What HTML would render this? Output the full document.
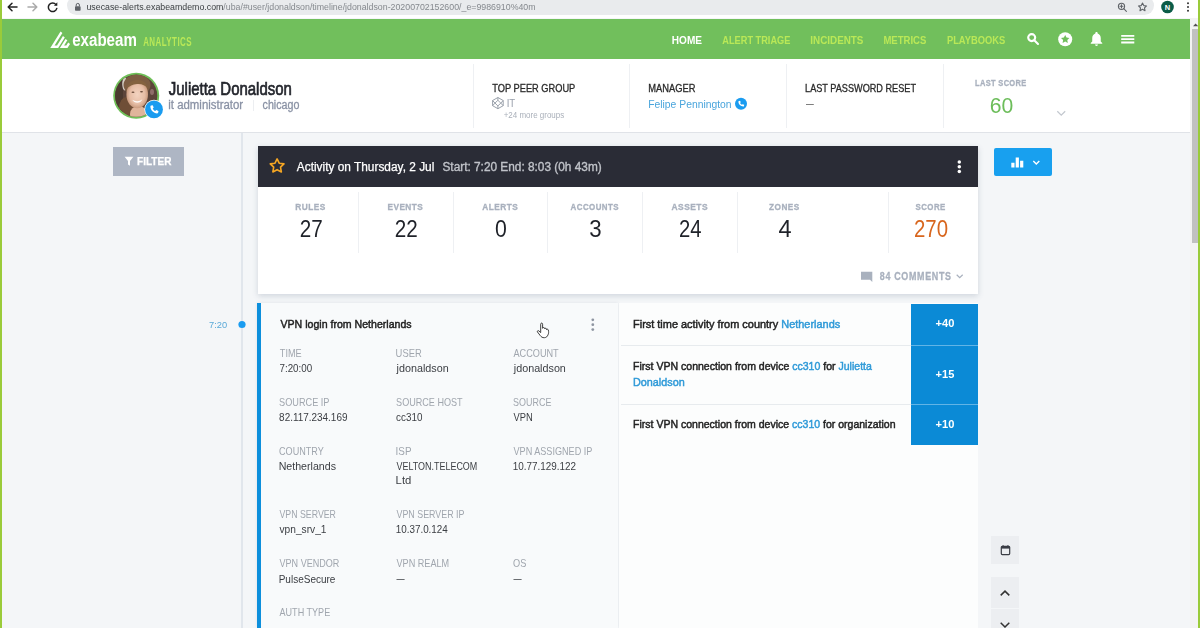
<!DOCTYPE html>
<html><head><meta charset="utf-8">
<style>
*{box-sizing:border-box;margin:0;padding:0}
html,body{width:1200px;height:628px;overflow:hidden;background:#f4f6f8;font-family:"Liberation Sans",sans-serif;}
.abs{position:absolute}
.t{position:absolute;white-space:nowrap;transform-origin:0 50%;line-height:1}
#chrome{left:0;top:0;width:1200px;height:18px;background:#fff}
#url{left:67px;top:-4px;width:1086.5px;height:19.4px;border-radius:10px;background:#e9ebed}
#nav{left:0;top:18.6px;width:1190px;height:40.4px;background:#71bf5c}
#prof{left:0;top:59px;width:1190px;height:74px;background:#fff;border-bottom:1.5px solid #e0e3e8}
#edgeL{left:0;top:0;width:2px;height:628px;background:#9acb3a}
#edgeR{left:1198px;top:0;width:2px;height:628px;background:#9acb3a}
#sbtrack{left:1190px;top:18px;width:8px;height:610px;background:#f3f3f3}
#sbthumb{left:1192px;top:29px;width:6px;height:213.5px;background:#c1c1c1}
.vd{position:absolute;width:1px;background:#eef0f3}
#tline{left:241.3px;top:133px;width:1.6px;height:495px;background:#e1e6ec}
#filter{left:113px;top:147px;width:71px;height:29px;background:#aeb6c4}
#card{left:257.5px;top:146px;width:720.5px;height:148px;background:#fff;box-shadow:0 2px 6px rgba(60,80,110,.2)}
#chead{left:257.5px;top:146px;width:720.5px;height:40.6px;background:#2a2c36}
#bluebtn{left:994px;top:148px;width:58px;height:27.8px;background:#18a0ef;border-radius:2px}
#ev{left:257px;top:303px;width:360.5px;height:325px;background:#f8fafb;box-shadow:0 0 3px rgba(60,80,110,.12)}
#evb{left:257px;top:303px;width:3.6px;height:325px;background:#0d8fdc}
#rp{left:619px;top:303px;width:359px;height:325px;background:#fcfdfd}
.sep{position:absolute;left:621px;width:290px;height:1px;background:#e7ebee}
.sc{position:absolute;left:911.4px;width:66.4px;background:#0b8ad6}
.fb{position:absolute;left:990.7px;width:28.2px;background:#eceef1}
</style></head><body>
<div class="abs" id="chrome"></div>
<div class="abs" id="url"></div>
<svg class="abs" style="left:0;top:0" width="1200" height="18" viewBox="0 0 1200 18">
 <g fill="none" stroke="#222" stroke-width="1.5" stroke-linecap="round" stroke-linejoin="round">
  <path d="M17 7H8.5M12 3.2L8.2 7l3.8 3.8"/>
  <path d="M28 7h8.5M33 3.2L36.8 7L33 10.8" stroke="#aaa"/>
  <path d="M56 4.6A4.3 4.3 0 1 0 56.8 8.4"/>
 </g>
 <path d="M57.3 2.3v3.4h-3.4z" fill="#222"/>
 <rect x="75" y="6.2" width="5.6" height="4.6" rx="0.8" fill="#5f6368"/>
 <path d="M76.2 6.4V5a1.6 1.6 0 0 1 3.2 0v1.4" fill="none" stroke="#5f6368" stroke-width="1"/>
 <g fill="none" stroke="#5f6368" stroke-width="1.1">
  <circle cx="1121.5" cy="6.3" r="3.1"/><path d="M1123.8 8.7l2.6 2.6M1120 6.3h3M1121.5 4.8v3" stroke-linecap="round"/>
  <path d="M1142.500 3l1.250 2.600 2.800.350-2.050 1.950.5 2.800-2.500-1.350-2.500 1.350.5-2.800-2.050-1.950 2.800-.350z" stroke-linejoin="round"/>
 </g>
 <circle cx="1167.5" cy="7" r="6.3" fill="#0b5c48"/>
 <text x="1167.5" y="9.7" font-family="Liberation Sans" font-size="7.5" font-weight="bold" fill="#fff" text-anchor="middle">N</text>
 <circle cx="1188" cy="3.3" r="1" fill="#333"/><circle cx="1188" cy="7" r="1" fill="#333"/><circle cx="1188" cy="10.7" r="1" fill="#333"/>
</svg>
<div class="abs" id="nav"></div>
<div class="abs" id="prof"></div>
<!-- nav icons -->
<svg class="abs" style="left:0;top:18px" width="1192" height="41" viewBox="0 18 1192 41">
 <g fill="none" stroke="#fff" stroke-width="2.4" stroke-linejoin="miter" transform="translate(60 0) scale(0.92 1) translate(-60 0)">
  <path d="M61.6 32.3L51.7 46.7H57.4L64.2 36.8"/>
  <path d="M67 39.6L62.1 46.7H67.5L69.9 43.2"/>
 </g>
 <g fill="none" stroke="#fff" stroke-width="2.1" stroke-linecap="round">
  <circle cx="1031.7" cy="37.6" r="3.5"/><path d="M1034.5 40.500l3.500 3.500"/>
 </g>
 <circle cx="1065.2" cy="39.2" r="7" fill="#fff"/>
 <path d="M1065.200 34.900l1.300 2.700 2.900.400-2.100 2 .5 2.900-2.600-1.400-2.600 1.400.5-2.900-2.100-2 2.900-.400z" fill="#71bf5c"/>
 <g transform="translate(1096.500 39.200) scale(1.150) translate(-1096 -39.400)">
 <path d="M1096 33.200c.600 0 1 .400 1 .900v.400c1.700.500 2.700 2 2.700 3.900v3.100l1.300 1.300v.600h-10v-.600l1.300-1.300v-3.100c0-1.900 1-3.400 2.700-3.900v-.400c0-.500.400-.900 1-.900zM1094.700 44.100h2.600a1.300 1.300 0 0 1-2.600 0z" fill="#fff"/>
 </g>
 <path d="M1121.200 35.900h13.100M1121.200 39.200h13.100M1121.200 42.500h13.100" stroke="#fff" stroke-width="1.800"/>
</svg>
<!-- profile -->
<div class="vd" style="left:472.5px;top:64px;height:64px"></div>
<div class="vd" style="left:629px;top:64px;height:64px"></div>
<div class="vd" style="left:786px;top:64px;height:64px"></div>
<div class="vd" style="left:942.5px;top:64px;height:64px"></div>
<div class="vd" style="left:253px;top:100px;height:11px;background:#eceef1"></div>
<svg class="abs" style="left:100px;top:59px" width="1000" height="74" viewBox="100 59 1000 74">
 <defs>
  <clipPath id="avc"><circle cx="136.200" cy="95.700" r="21.100"/></clipPath>
  <radialGradient id="face" cx="0.5" cy="0.5" r="0.5"><stop offset="0" stop-color="#f3d3c0"/><stop offset="0.700" stop-color="#e6bda5"/><stop offset="1" stop-color="#c99a7e"/></radialGradient>
 </defs>
 <circle cx="136.200" cy="95.700" r="23" fill="#6fbf58"/>
 <g clip-path="url(#avc)">
  <rect x="113" y="72" width="47" height="47" fill="#5c443a"/>
  <rect x="113" y="72" width="10" height="47" fill="#4b392f"/>
  <ellipse cx="124.800" cy="84" rx="2.600" ry="6.500" fill="#ece6df" opacity="0.850"/>
  <ellipse cx="152" cy="92" rx="2" ry="3" fill="#b08a8a" opacity="0.600"/>
  <ellipse cx="137" cy="85" rx="13.500" ry="10.500" fill="#7d5d42"/>
  <ellipse cx="126.500" cy="108" rx="7.500" ry="11" fill="#6f4e37"/>
  <ellipse cx="138.500" cy="114" rx="8.500" ry="8" fill="#e0b59b"/>
  <ellipse cx="137.200" cy="94.500" rx="10.800" ry="13.800" fill="url(#face)"/>
  <path d="M126.500 89c1.500-7 7-9.500 12-9c5 .5 8.500 3.500 9.500 8.500c-3-3.500-6.500-5-11-4.500c-4.500.5-7.500 2-10.500 5z" fill="#84623f"/>
  <path d="M132.300 99.800c3 1.900 7.500 1.900 10-.6c-1.400 4.300-8 4.900-10 .6z" fill="#fdf8f5"/>
  <ellipse cx="133" cy="92.200" rx="1.500" ry="0.700" fill="#6a4b3a"/><ellipse cx="141.500" cy="91.800" rx="1.500" ry="0.700" fill="#6a4b3a"/>
 </g>
 <circle cx="154" cy="109.400" r="9.600" fill="#fff"/>
 <circle cx="154" cy="109.400" r="8.900" fill="#1a9cf0"/>
 <path id="ph" d="M151.200 105.600l1.500-.3 1 2.300-1 .9c.5 1.200 1.400 2.100 2.600 2.600l.9-1 2.300 1-.3 1.500c-.1.500-.5.800-1 .8-3.700 0-6.800-3.100-6.800-6.800 0-.5.300-.9.800-1z" fill="#fff"/>
 <!-- peer group icon -->
 <g fill="none" stroke="#8f96a1" stroke-width="0.9" stroke-linejoin="round">
  <path d="M497.900 97.500l5.300 3v5.200l-5.300 3-5.300-3v-5.200z"/>
  <path d="M497.900 100.300l2.900 2.800-2.900 2.800-2.900-2.800z"/>
  <path d="M497.900 97.500v2.800M497.900 105.900v2.800M492.600 100.500l2.400 2.600-2.400 2.600M503.200 100.500l-2.400 2.600 2.400 2.600"/>
 </g>
 <circle cx="741" cy="103.700" r="6" fill="#1a9cf0"/>
 <path d="M739 100.900l1.050-.2.700 1.650-.7.650c.35.850 1 1.500 1.850 1.850l.65-.7 1.650.7-.2 1.050c-.1.350-.35.600-.7.600-2.650 0-4.900-2.250-4.900-4.900 0-.35.250-.6.600-.7z" fill="#fff"/>
 <path d="M1057.300 111.300l3.950 3.800 3.950-3.800" fill="none" stroke="#c3c8cf" stroke-width="1.300"/>
</svg>
<!-- body -->
<div class="abs" id="tline"></div>
<div class="abs" id="filter"></div>
<div class="abs" id="card"></div>
<div class="abs" id="chead"></div>
<div class="abs" id="bluebtn"></div>
<div class="vd" style="left:358px;top:192px;height:61px"></div>
<div class="vd" style="left:452.5px;top:192px;height:61px"></div>
<div class="vd" style="left:546.5px;top:192px;height:61px"></div>
<div class="vd" style="left:642px;top:192px;height:61px"></div>
<div class="vd" style="left:736.5px;top:192px;height:61px"></div>
<div class="vd" style="left:888px;top:192px;height:61px"></div>
<div class="abs" id="ev"></div>
<div class="abs" id="rp"></div>
<div class="abs" id="evb"></div>
<div class="sep" style="top:345.2px"></div>
<div class="sep" style="top:403.8px"></div>
<div class="sc" style="top:303.5px;height:141.8px"></div>
<div class="sc" style="top:345px;height:1.3px;background:#62b4e6"></div>
<div class="sc" style="top:403.6px;height:1.3px;background:#62b4e6"></div>
<div class="fb" style="top:536.4px;height:28px"></div>
<div class="fb" style="top:577px;height:31.3px"></div>
<div class="fb" style="top:609.2px;height:30px"></div>
<svg class="abs" style="left:100px;top:133px" width="1000" height="495" viewBox="100 133 1000 495">
 <!-- funnel -->
 <path d="M124.600 156.800h8.800l-3.400 4.100v4.900l-2-1.300v-3.600z" fill="#fff"/>
 <!-- star -->
 <path transform="translate(277.100 166.100) scale(1.080) translate(-277.200 -167.300)" d="M277.200 160.600l1.950 4 4.400.6-3.200 3.100.78 4.400-3.930-2.100-3.930 2.100.78-4.400-3.200-3.100 4.400-.6z" fill="none" stroke="#f5a623" stroke-width="1.500" stroke-linejoin="round"/>
 <!-- header kebab -->
 <circle cx="959.300" cy="162" r="1.750" fill="#fff"/><circle cx="959.300" cy="166.800" r="1.750" fill="#fff"/><circle cx="959.300" cy="171.600" r="1.750" fill="#fff"/>
 <!-- bars + chevron -->
 <path d="M1011.300 162.700h3.200v4.900h-3.200zM1015.700 157.600h3.200v10h-3.200zM1020.100 160.700h3.200v6.900h-3.200z" fill="#fff"/>
 <path d="M1033.300 161l3 3 3-3" fill="none" stroke="#fff" stroke-width="1.400"/>
 <!-- comments icon + chevron -->
 <path d="M861 271.700h11.300v8h-9l-2.300 2.200z" fill="#a9b1be" transform="translate(1733.300 0) scale(-1 1)"/>
 <path d="M956.700 274.800l3 2.900 3-2.900" fill="none" stroke="#a9b1be" stroke-width="1.200"/>
 <!-- timeline dot -->
 <circle cx="242" cy="324.500" r="3.600" fill="#1a9cf0"/>
 <!-- event kebab -->
 <circle cx="592.800" cy="319.800" r="1.400" fill="#8e95a1"/><circle cx="592.800" cy="324.700" r="1.400" fill="#8e95a1"/><circle cx="592.800" cy="329.600" r="1.400" fill="#8e95a1"/>
 <!-- hand cursor -->
 <path d="M540.700 324.200c0-1.500 1.900-1.500 1.900 0v4.100c.2-1 1.900-1 2 0v.6c.2-.9 1.800-.8 1.900.1v.7c.3-.8 1.700-.6 1.800.3.500 2 .4 3.400-.3 4.800-.6 1.600-1.700 2.800-3.600 2.900-2 .1-3.200-.8-4.300-2.300l-2.600-3.400c-.6-.9.500-1.800 1.400-1.100l1.800 1.700z" fill="#fff" stroke="#2a2a2a" stroke-width="0.900" stroke-linejoin="round"/>
 <!-- calendar -->
 <rect x="1001.300" y="546.300" width="8.400" height="8.300" rx="1" fill="none" stroke="#3a3d45" stroke-width="1.200"/>
 <path d="M1001.300 546.300h8.400v2.300h-8.400z" fill="#3a3d45"/>
 <path d="M1003.100 545.200v1.500M1007.900 545.200v1.500" stroke="#3a3d45" stroke-width="1.200"/>
 <path d="M1000.700 595.400l4.300-4.300 4.300 4.300" fill="none" stroke="#333" stroke-width="1.500"/>
 <path d="M1000.700 622.700l4.300 4.300 4.300-4.300" fill="none" stroke="#333" stroke-width="1.500"/>
</svg>
<div id="txt" style="position:absolute;left:0;top:0;width:1200px;height:628px;will-change:transform">
<div class="t" id="t0" style="left:86px;top:2px;font-size:9.00px;line-height:10px;font-weight:normal;color:#85898e;transform:translateX(0.47px) scaleX(0.9772)"><span style="color:#3c4043">usecase-alerts.exabeamdemo.com</span>/uba/#user/jdonaldson/timeline/jdonaldson-20200702152600/_e=9986910%40m</div>
<div class="t" id="t1" style="left:72px;top:30px;font-size:17.60px;line-height:20px;font-weight:bold;color:#fff;transform:translateX(0.17px) scaleX(0.8591)">exabeam</div>
<div class="t" id="t2" style="left:143px;top:35px;font-size:12.30px;line-height:14px;font-weight:bold;color:#b9e857;letter-spacing:0.7px;transform:translateX(0.14px) scaleX(0.6473)">ANALYTICS</div>
<div class="t" id="t3" style="left:671px;top:34px;font-size:10.80px;line-height:12px;font-weight:bold;color:#fff;transform:translateX(0.85px) scaleX(0.9330)">HOME</div>
<div class="t" id="t4" style="left:722px;top:34px;font-size:10.80px;line-height:12px;font-weight:bold;color:#b9e857;transform:translateX(0.32px) scaleX(0.8525)">ALERT TRIAGE</div>
<div class="t" id="t5" style="left:810px;top:34px;font-size:10.80px;line-height:12px;font-weight:bold;color:#b9e857;transform:translateX(0.36px) scaleX(0.9107)">INCIDENTS</div>
<div class="t" id="t6" style="left:883px;top:34px;font-size:10.80px;line-height:12px;font-weight:bold;color:#b9e857;transform:translateX(0.38px) scaleX(0.8842)">METRICS</div>
<div class="t" id="t7" style="left:946px;top:34px;font-size:10.80px;line-height:12px;font-weight:bold;color:#b9e857;transform:translateX(0.89px) scaleX(0.8671)">PLAYBOOKS</div>
<div class="t" id="t8" style="left:168px;top:78px;font-size:18.60px;line-height:21px;font-weight:normal;color:#24262d;-webkit-text-stroke:0.7px #24262d;transform:translateX(0.78px) scaleX(0.8047)">Julietta Donaldson</div>
<div class="t" id="t9" style="left:168px;top:98px;font-size:12.00px;line-height:14px;font-weight:normal;color:#8a92a5;-webkit-text-stroke:0.3px #8a92a5;transform:translateX(0.26px) scaleX(0.9517)">it administrator</div>
<div class="t" id="t10" style="left:262px;top:98px;font-size:12.00px;line-height:14px;font-weight:normal;color:#8a92a5;-webkit-text-stroke:0.3px #8a92a5;transform:translateX(0.57px) scaleX(0.8914)">chicago</div>
<div class="t" id="t11" style="left:492px;top:83px;font-size:10.30px;line-height:11px;font-weight:normal;color:#2a2a2a;-webkit-text-stroke:0.3px #2a2a2a;transform:translateX(0.31px) scaleX(0.8988)">TOP PEER GROUP</div>
<div class="t" id="t12" style="left:506px;top:98px;font-size:10.00px;line-height:11px;font-weight:normal;color:#979eaa;transform:translateX(0.63px) scaleX(0.9642)">IT</div>
<div class="t" id="t13" style="left:503px;top:110px;font-size:8.60px;line-height:10px;font-weight:normal;color:#aab0ba;transform:translateX(0.64px) scaleX(0.9293)">+24 more groups</div>
<div class="t" id="t14" style="left:648px;top:83px;font-size:10.30px;line-height:11px;font-weight:normal;color:#2a2a2a;-webkit-text-stroke:0.3px #2a2a2a;transform:translateX(0.25px) scaleX(0.9052)">MANAGER</div>
<div class="t" id="t15" style="left:648px;top:98px;font-size:11.30px;line-height:12px;font-weight:normal;color:#4aa5dc;transform:translateX(0.17px) scaleX(0.9162)">Felipe Pennington</div>
<div class="t" id="t16" style="left:805px;top:83px;font-size:10.30px;line-height:11px;font-weight:normal;color:#2a2a2a;-webkit-text-stroke:0.3px #2a2a2a;transform:translateX(0.07px) scaleX(0.8879)">LAST PASSWORD RESET</div>
<div class="t" id="t17" style="left:975px;top:78px;font-size:8.80px;line-height:10px;font-weight:bold;color:#a9b1be;-webkit-text-stroke:0.3px #a9b1be;letter-spacing:0.4px;transform:translateX(0.01px) scaleX(0.8499)">LAST SCORE</div>
<div class="t" id="t18" style="left:989px;top:92px;font-size:22.80px;line-height:26px;font-weight:normal;color:#6cbd5a;transform:translateX(0.74px) scaleX(0.9275)">60</div>
<div class="t" id="t19" style="left:137px;top:156px;font-size:10.40px;line-height:11px;font-weight:bold;color:#fff;-webkit-text-stroke:0.25px #fff;transform:translateX(0.05px) scaleX(0.9664)">FILTER</div>
<div class="t" id="t20" style="left:296px;top:160px;font-size:12.00px;line-height:14px;font-weight:normal;color:#fff;-webkit-text-stroke:0.25px #fff;transform:translateX(0.80px) scaleX(0.9897)">Activity on Thursday, 2 Jul</div>
<div class="t" id="t21" style="left:442px;top:160px;font-size:12.00px;line-height:14px;font-weight:normal;color:#c0c3c9;-webkit-text-stroke:0.35px #c0c3c9;transform:translateX(0.47px) scaleX(0.9863)">Start: 7:20 End: 8:03 (0h 43m)</div>
<div class="t" id="t22" style="left:295px;top:202px;font-size:8.80px;line-height:10px;font-weight:bold;color:#a9b1be;-webkit-text-stroke:0.3px #a9b1be;letter-spacing:0.5px;transform:translateX(0.26px) scaleX(0.9442)">RULES</div>
<div class="t" id="t23" style="left:387px;top:202px;font-size:8.80px;line-height:10px;font-weight:bold;color:#a9b1be;-webkit-text-stroke:0.3px #a9b1be;letter-spacing:0.5px;transform:translateX(0.46px) scaleX(0.9372)">EVENTS</div>
<div class="t" id="t24" style="left:482px;top:202px;font-size:8.80px;line-height:10px;font-weight:bold;color:#a9b1be;-webkit-text-stroke:0.3px #a9b1be;letter-spacing:0.5px;transform:translateX(0.33px) scaleX(0.9409)">ALERTS</div>
<div class="t" id="t25" style="left:570px;top:202px;font-size:8.80px;line-height:10px;font-weight:bold;color:#a9b1be;-webkit-text-stroke:0.3px #a9b1be;letter-spacing:0.5px;transform:translateX(0.54px) scaleX(0.9004)">ACCOUNTS</div>
<div class="t" id="t26" style="left:671px;top:202px;font-size:8.80px;line-height:10px;font-weight:bold;color:#a9b1be;-webkit-text-stroke:0.3px #a9b1be;letter-spacing:0.5px;transform:translateX(0.53px) scaleX(0.9568)">ASSETS</div>
<div class="t" id="t27" style="left:769px;top:202px;font-size:8.80px;line-height:10px;font-weight:bold;color:#a9b1be;-webkit-text-stroke:0.3px #a9b1be;letter-spacing:0.5px;transform:translateX(0.09px) scaleX(0.9349)">ZONES</div>
<div class="t" id="t28" style="left:915px;top:202px;font-size:8.80px;line-height:10px;font-weight:bold;color:#a9b1be;-webkit-text-stroke:0.3px #a9b1be;letter-spacing:0.5px;transform:translateX(0.50px) scaleX(0.8947)">SCORE</div>
<div class="t" id="t29" style="left:299px;top:216px;font-size:23.00px;line-height:26px;font-weight:normal;color:#1f2229;transform:translateX(0.67px) scaleX(0.8985)">27</div>
<div class="t" id="t30" style="left:394px;top:216px;font-size:23.00px;line-height:26px;font-weight:normal;color:#1f2229;transform:translateX(0.67px) scaleX(0.8985)">22</div>
<div class="t" id="t31" style="left:494px;top:216px;font-size:23.00px;line-height:26px;font-weight:normal;color:#1f2229;transform:translateX(0.96px) scaleX(0.9234)">0</div>
<div class="t" id="t32" style="left:589px;top:216px;font-size:23.00px;line-height:26px;font-weight:normal;color:#1f2229;transform:translateX(0.22px) scaleX(0.9692)">3</div>
<div class="t" id="t33" style="left:678px;top:216px;font-size:23.00px;line-height:26px;font-weight:normal;color:#1f2229;transform:translateX(0.99px) scaleX(0.8812)">24</div>
<div class="t" id="t34" style="left:778px;top:216px;font-size:23.00px;line-height:26px;font-weight:normal;color:#1f2229;transform:translateX(0.53px) scaleX(1.0230)">4</div>
<div class="t" id="t35" style="left:913px;top:216px;font-size:23.00px;line-height:26px;font-weight:normal;color:#d8661e;transform:translateX(0.98px) scaleX(0.8875)">270</div>
<div class="t" id="t36" style="left:879px;top:271px;font-size:10.30px;line-height:11px;font-weight:bold;color:#a9b1be;-webkit-text-stroke:0.3px #a9b1be;letter-spacing:0.8px;transform:translateX(0.73px) scaleX(0.8653)">84 COMMENTS</div>
<div class="t" id="t37" style="left:209px;top:319px;font-size:9.60px;line-height:11px;font-weight:normal;color:#5aa9d8;transform:translateX(0.03px) scaleX(0.9688)">7:20</div>
<div class="t" id="t38" style="left:280px;top:318px;font-size:10.60px;line-height:12px;font-weight:normal;color:#1e1e1e;-webkit-text-stroke:0.45px #1e1e1e;transform:translateX(0.50px) scaleX(0.9984)">VPN login from Netherlands</div>
<div class="t" id="t39" style="left:279px;top:348px;font-size:10.30px;line-height:11px;font-weight:normal;color:#a0a6ae;transform:translateX(0.82px) scaleX(0.8888)">TIME</div>
<div class="t" id="t40" style="left:279px;top:363px;font-size:10.00px;line-height:11px;font-weight:normal;color:#3b3e43;transform:translateX(0.51px) scaleX(0.9784)">7:20:00</div>
<div class="t" id="t41" style="left:395px;top:348px;font-size:10.30px;line-height:11px;font-weight:normal;color:#a0a6ae;transform:translateX(0.60px) scaleX(0.9121)">USER</div>
<div class="t" id="t42" style="left:396px;top:363px;font-size:10.00px;line-height:11px;font-weight:normal;color:#3b3e43;transform:translateX(0.57px) scaleX(1.0768)">jdonaldson</div>
<div class="t" id="t43" style="left:513px;top:348px;font-size:10.30px;line-height:11px;font-weight:normal;color:#a0a6ae;transform:translateX(0.50px) scaleX(0.8874)">ACCOUNT</div>
<div class="t" id="t44" style="left:513px;top:363px;font-size:10.00px;line-height:11px;font-weight:normal;color:#3b3e43;transform:translateX(0.77px) scaleX(1.0768)">jdonaldson</div>
<div class="t" id="t45" style="left:279px;top:397px;font-size:10.30px;line-height:11px;font-weight:normal;color:#a0a6ae;transform:translateX(0.09px) scaleX(0.8893)">SOURCE IP</div>
<div class="t" id="t46" style="left:279px;top:412px;font-size:10.00px;line-height:11px;font-weight:normal;color:#3b3e43;transform:translateX(0.10px) scaleX(0.9940)">82.117.234.169</div>
<div class="t" id="t47" style="left:396px;top:397px;font-size:10.30px;line-height:11px;font-weight:normal;color:#a0a6ae;transform:translateX(0.09px) scaleX(0.8816)">SOURCE HOST</div>
<div class="t" id="t48" style="left:396px;top:412px;font-size:10.00px;line-height:11px;font-weight:normal;color:#3b3e43;transform:translateX(0.11px) scaleX(0.9837)">cc310</div>
<div class="t" id="t49" style="left:513px;top:397px;font-size:10.30px;line-height:11px;font-weight:normal;color:#a0a6ae;transform:translateX(0.10px) scaleX(0.8686)">SOURCE</div>
<div class="t" id="t50" style="left:513px;top:412px;font-size:10.00px;line-height:11px;font-weight:normal;color:#3b3e43;transform:translateX(0.50px) scaleX(0.9348)">VPN</div>
<div class="t" id="t51" style="left:279px;top:446px;font-size:10.30px;line-height:11px;font-weight:normal;color:#a0a6ae;transform:translateX(0.05px) scaleX(0.8820)">COUNTRY</div>
<div class="t" id="t52" style="left:278px;top:461px;font-size:10.00px;line-height:11px;font-weight:normal;color:#3b3e43;transform:translateX(0.65px) scaleX(1.0631)">Netherlands</div>
<div class="t" id="t53" style="left:395px;top:446px;font-size:10.30px;line-height:11px;font-weight:normal;color:#a0a6ae;transform:translateX(0.61px) scaleX(0.9578)">ISP</div>
<div class="t" id="t54" style="left:396px;top:461px;font-size:10.00px;line-height:11px;font-weight:normal;color:#3b3e43;transform:translateX(0.50px) scaleX(0.8957)">VELTON.TELECOM</div>
<div class="t" id="t55" style="left:395px;top:475px;font-size:10.00px;line-height:11px;font-weight:normal;color:#3b3e43;transform:translateX(0.60px) scaleX(1.1289)">Ltd</div>
<div class="t" id="t56" style="left:513px;top:446px;font-size:10.30px;line-height:11px;font-weight:normal;color:#a0a6ae;transform:translateX(0.50px) scaleX(0.8833)">VPN ASSIGNED IP</div>
<div class="t" id="t57" style="left:512px;top:461px;font-size:10.00px;line-height:11px;font-weight:normal;color:#3b3e43;transform:translateX(0.76px) scaleX(0.9898)">10.77.129.122</div>
<div class="t" id="t58" style="left:279px;top:509px;font-size:10.30px;line-height:11px;font-weight:normal;color:#a0a6ae;transform:translateX(0.50px) scaleX(0.8529)">VPN SERVER</div>
<div class="t" id="t59" style="left:279px;top:524px;font-size:10.00px;line-height:11px;font-weight:normal;color:#3b3e43;transform:translateX(0.50px) scaleX(1.0180)">vpn_srv_1</div>
<div class="t" id="t60" style="left:396px;top:509px;font-size:10.30px;line-height:11px;font-weight:normal;color:#a0a6ae;transform:translateX(0.50px) scaleX(0.8624)">VPN SERVER IP</div>
<div class="t" id="t61" style="left:395px;top:524px;font-size:10.00px;line-height:11px;font-weight:normal;color:#3b3e43;transform:translateX(0.76px) scaleX(0.9843)">10.37.0.124</div>
<div class="t" id="t62" style="left:279px;top:558px;font-size:10.30px;line-height:11px;font-weight:normal;color:#a0a6ae;transform:translateX(0.50px) scaleX(0.8792)">VPN VENDOR</div>
<div class="t" id="t63" style="left:278px;top:574px;font-size:10.00px;line-height:11px;font-weight:normal;color:#3b3e43;transform:translateX(0.70px) scaleX(1.0002)">PulseSecure</div>
<div class="t" id="t64" style="left:396px;top:558px;font-size:10.30px;line-height:11px;font-weight:normal;color:#a0a6ae;transform:translateX(0.50px) scaleX(0.8838)">VPN REALM</div>
<div class="t" id="t65" style="left:396px;top:573px;font-size:10.00px;line-height:11px;font-weight:normal;color:#3b3e43;transform:translateX(0.50px) scaleX(0.8100)">—</div>
<div class="t" id="t66" style="left:513px;top:558px;font-size:10.30px;line-height:11px;font-weight:normal;color:#a0a6ae;transform:translateX(0.09px) scaleX(0.8938)">OS</div>
<div class="t" id="t67" style="left:513px;top:573px;font-size:10.00px;line-height:11px;font-weight:normal;color:#3b3e43;transform:translateX(0.50px) scaleX(0.8100)">—</div>
<div class="t" id="t68" style="left:279px;top:607px;font-size:10.30px;line-height:11px;font-weight:normal;color:#a0a6ae;transform:translateX(0.50px) scaleX(0.8803)">AUTH TYPE</div>
<div class="t" id="t69" style="left:806px;top:98px;font-size:10.20px;line-height:11px;font-weight:normal;color:#555;transform:translateX(0.00px) scaleX(0.7647)">—</div>
<div class="t" id="t70" style="left:633px;top:318px;font-size:10.60px;line-height:12px;font-weight:normal;color:#222;-webkit-text-stroke:0.45px;transform:translateX(0.03px) scaleX(1.0318)">First time activity from country <span style="color:#2f9ad8">Netherlands</span></div>
<div class="t" id="t71" style="left:633px;top:360px;font-size:10.60px;line-height:12px;font-weight:normal;color:#222;-webkit-text-stroke:0.45px;transform:translateX(0.06px) scaleX(0.9939)">First VPN connection from device <span style="color:#2f9ad8">cc310</span> for <span style="color:#2f9ad8">Julietta</span></div>
<div class="t" id="t72" style="left:633px;top:376px;font-size:10.60px;line-height:12px;font-weight:normal;color:#2f9ad8;-webkit-text-stroke:0.45px;transform:translateX(0.04px) scaleX(1.0186)">Donaldson</div>
<div class="t" id="t73" style="left:633px;top:418px;font-size:10.60px;line-height:12px;font-weight:normal;color:#222;-webkit-text-stroke:0.45px;transform:translateX(0.06px) scaleX(0.9926)">First VPN connection from device <span style="color:#2f9ad8">cc310</span> for organization</div>
<div class="t" id="t74" style="left:935px;top:317px;font-size:11.50px;line-height:12px;font-weight:bold;color:#fff;transform:translateX(0.56px) scaleX(0.9661)">+40</div>
<div class="t" id="t75" style="left:935px;top:368px;font-size:11.50px;line-height:12px;font-weight:bold;color:#fff;transform:translateX(0.56px) scaleX(0.9602)">+15</div>
<div class="t" id="t76" style="left:935px;top:418px;font-size:11.50px;line-height:12px;font-weight:bold;color:#fff;transform:translateX(0.56px) scaleX(0.9661)">+10</div>
</div>
<div class="abs" id="sbtrack"></div>
<div class="abs" id="sbthumb"></div>
<svg class="abs" style="left:1190px;top:18px" width="8" height="12" viewBox="1190 18 8 12"><path d="M1193 26.200l2.600-2.800 2.600 2.800z" fill="#505050"/></svg>
<div class="abs" id="edgeL"></div>
<div class="abs" id="edgeR"></div>
</body></html>
